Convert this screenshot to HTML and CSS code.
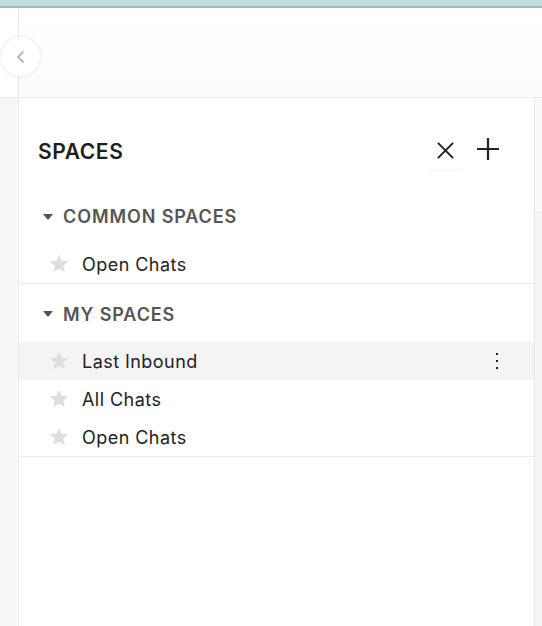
FILE: index.html
```html
<!DOCTYPE html>
<html>
<head>
<meta charset="utf-8">
<link rel="stylesheet" href="styles.css">
</head>
<body>
<div class="topbar"></div>
<div class="main">
  <div class="rail">
    <div class="rail-top"></div>
    <div class="rail-bottom"></div>
  </div>
  <div class="content">
    <div class="content-top"></div>
    <div class="content-body">
      <div class="panel">
        <div class="panel-header">
          <h1 class="panel-title">SPACES</h1>
          <div class="panel-actions">
            <button class="icon-btn close-btn" aria-label="Close">
              <svg width="19" height="19" viewBox="0 0 20 20"><path d="M2 2L18 18M18 2L2 18" stroke="#222" stroke-width="2.1" fill="none"/></svg>
            </button>
            <button class="icon-btn add-btn" aria-label="Add">
              <svg width="22" height="22" viewBox="0 0 22 22"><path d="M11 0V22M0 11H22" stroke="#222" stroke-width="2.2" fill="none"/></svg>
            </button>
          </div>
        </div>

        <div class="section">
          <div class="section-heading">
            <span class="caret"></span>
            <span class="section-title">COMMON SPACES</span>
          </div>
          <div class="row">
            <svg class="star" width="20" height="20" viewBox="0 0 24 24"><path d="M12 1l3.2 7.1 7.8.7-5.9 5.2 1.8 7.7L12 17.7l-6.9 4 1.8-7.7L1 8.8l7.8-.7z" fill="#dedede"/></svg>
            <span class="row-label">Open Chats</span>
          </div>
        </div>

        <div class="section">
          <div class="section-heading">
            <span class="caret"></span>
            <span class="section-title">MY SPACES</span>
          </div>
          <div class="row hover">
            <svg class="star" width="20" height="20" viewBox="0 0 24 24"><path d="M12 1l3.2 7.1 7.8.7-5.9 5.2 1.8 7.7L12 17.7l-6.9 4 1.8-7.7L1 8.8l7.8-.7z" fill="#dedede"/></svg>
            <span class="row-label">Last Inbound</span>
            <span class="kebab"><i></i><i></i><i></i></span>
          </div>
          <div class="row">
            <svg class="star" width="20" height="20" viewBox="0 0 24 24"><path d="M12 1l3.2 7.1 7.8.7-5.9 5.2 1.8 7.7L12 17.7l-6.9 4 1.8-7.7L1 8.8l7.8-.7z" fill="#dedede"/></svg>
            <span class="row-label">All Chats</span>
          </div>
          <div class="row">
            <svg class="star" width="20" height="20" viewBox="0 0 24 24"><path d="M12 1l3.2 7.1 7.8.7-5.9 5.2 1.8 7.7L12 17.7l-6.9 4 1.8-7.7L1 8.8l7.8-.7z" fill="#dedede"/></svg>
            <span class="row-label">Open Chats</span>
          </div>
        </div>
      </div>
      <div class="right-strip">
        <div class="right-strip-top"></div>
      </div>
    </div>
  </div>
</div>
<button class="collapse-btn" aria-label="Collapse">
  <svg width="12" height="16" viewBox="0 0 12 16"><path d="M8.5 2.5L3 8L8.5 13.5" stroke="#b8b8b8" stroke-width="2" fill="none"/></svg>
</button>
</body>
</html>
```
FILE: styles.css
```css
* { box-sizing: border-box; }
html, body { margin: 0; padding: 0; height: 100%; }
body {
  font-family: Inter, "Liberation Sans", Arial, sans-serif;
  color: #222;
  background: #fff;
  overflow: hidden;
  position: relative;
}
.topbar {
  height: 8px;
  background: #bfe0e3;
  border-bottom: 2px solid #a2b9bd;
}
.main {
  display: flex;
  height: calc(100% - 8px);
}
.rail {
  width: 19px;
  border-right: 1px solid #e6e6e6;
  display: flex;
  flex-direction: column;
}
.rail-top {
  height: 89px;
  background: #fff;
}
.rail-bottom {
  flex: 1;
  background: #f6f6f6;
  border-top: 1px solid #e8e8e8;
  margin-right: 1px;
}
.content {
  flex: 1;
  display: flex;
  flex-direction: column;
}
.content-top {
  height: 90px;
  border-bottom: 1px solid #ebebeb;
  background: linear-gradient(#fff, #fcfcfc);
}
.content-body {
  flex: 1;
  display: flex;
}
.panel {
  width: 516px;
  border-right: 1px solid #e8e8e8;
}
.right-strip {
  flex: 1;
  background: #f5f5f5;
  display: flex;
  flex-direction: column;
}
.right-strip-top {
  height: 115px;
  border-bottom: 1px solid #ececec;
  background: #fafafa;
}
.panel-header {
  height: 88px;
  display: flex;
  align-items: flex-start;
  justify-content: space-between;
  padding: 41px 34px 0 19px;
}
.panel-title {
  margin: 0;
  font-size: 21px;
  line-height: 26px;
  font-weight: 600;
  letter-spacing: 0.6px;
  color: #1e1e1e;
}
.panel-actions {
  display: flex;
  align-items: center;
  gap: 11px;
  margin-top: -8px;
}
.icon-btn {
  border: 0;
  background: #fff;
  padding: 0;
  display: flex;
  align-items: center;
  justify-content: center;
  height: 38px;
  cursor: pointer;
}
.close-btn {
  width: 40px;
  border-radius: 8px;
  box-shadow: 0 2px 2px rgba(0,0,0,0.025);
}
.add-btn {
  width: 24px;
  margin-top: -2px;
}
.section {
  border-bottom: 1px solid #ebebeb;
}
.section-heading {
  height: 59px;
  display: flex;
  align-items: center;
  padding-left: 24px;
  padding-top: 2px;
  gap: 10px;
}
.section + .section .section-heading {
  height: 58px;
}
.caret {
  width: 0;
  height: 0;
  border-left: 5px solid transparent;
  border-right: 5px solid transparent;
  border-top: 6px solid #555;
}
.section-title {
  font-size: 18px;
  font-weight: 600;
  color: #555;
  letter-spacing: 0.9px;
}
.row {
  height: 38px;
  display: flex;
  align-items: center;
  padding-left: 30px;
  padding-right: 35px;
  gap: 13px;
}
.row.hover { background: #f4f4f4; }
.star { flex: none; }
.row-label {
  flex: 1;
  font-size: 18px;
  color: #222;
  letter-spacing: 0.45px;
}
.kebab {
  display: flex;
  flex-direction: column;
  gap: 4.5px;
  width: 4px;
  align-items: center;
}
.kebab i {
  display: block;
  width: 2.5px;
  height: 2.5px;
  background: #222;
}
.collapse-btn {
  position: absolute;
  left: 1px;
  top: 37px;
  width: 39px;
  height: 39px;
  border-radius: 50%;
  border: 0;
  background: #fff;
  box-shadow: 0 0 4px rgba(0,0,0,0.12);
  display: flex;
  align-items: center;
  justify-content: center;
  padding: 0;
}
```
